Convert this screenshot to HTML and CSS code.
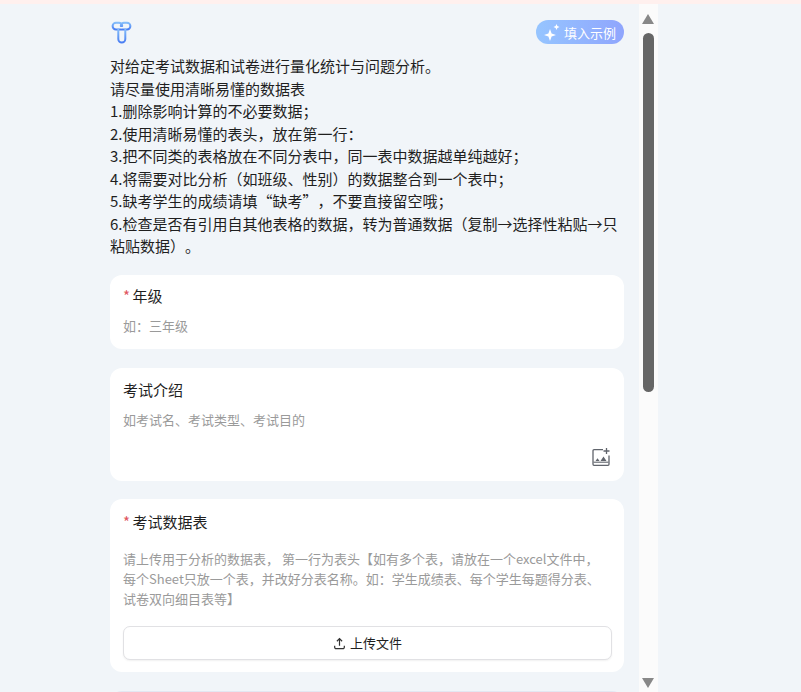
FILE: index.html
```html
<!DOCTYPE html>
<html lang="zh-CN">
<head>
<meta charset="utf-8">
<title>考试数据分析</title>
<link rel="stylesheet" href="styles.css">
</head>
<body>
<div class="top-strip"></div>
<div class="page">
  <main class="content">
    <header class="head">
      <svg class="logo" width="22" height="24" viewBox="0 0 22 24" fill="none">
        <defs><linearGradient id="lg" x1="0" y1="0" x2="0" y2="1"><stop offset="0" stop-color="#84bdf9"/><stop offset="1" stop-color="#4a7ef3"/></linearGradient></defs>
        <path d="M10 8.500H5a3.200 3.200 0 0 1 0-6.800h3a3.200 3.200 0 0 1 3.200 3.200V5M11 8.500h5a3.200 3.200 0 0 0 0-6.800h-3a3.200 3.200 0 0 0-3.200 3.200V5" stroke="url(#lg)" stroke-width="2" stroke-linecap="round"/>
        <path d="M7.300 8.500v9.500a3.500 3.500 0 0 0 7 0v-9.500" stroke="url(#lg)" stroke-width="2" stroke-linecap="round"/>
      </svg>
      <button class="fill-btn" type="button">
        <svg width="20" height="20" viewBox="0 0 20 20" fill="#fff"><path d="M7 7l1.600 4.400L13 13l-4.400 1.600L7 19l-1.600-4.400L1 13l4.400-1.600z"/><path d="M13.500 2l.9 2.100 2.100.9-2.100.9-.9 2.100-.9-2.100-2.100-.9 2.100-.9z"/></svg>
        <span>填入示例</span>
      </button>
    </header>
    <div class="intro">
      <p>对给定考试数据和试卷进行量化统计与问题分析。</p>
      <p>请尽量使用清晰易懂的数据表</p>
      <p>1.删除影响计算的不必要数据；</p>
      <p>2.使用清晰易懂的表头，放在第一行：</p>
      <p>3.把不同类的表格放在不同分表中，同一表中数据越单纯越好；</p>
      <p>4.将需要对比分析（如班级、性别）的数据整合到一个表中；</p>
      <p>5.缺考学生的成绩请填“缺考”，不要直接留空哦；</p>
      <p>6.检查是否有引用自其他表格的数据，转为普通数据（复制→选择性粘贴→只粘贴数据）。</p>
    </div>
    <section class="card card-grade">
      <div class="label"><span class="req">*</span> 年级</div>
      <div class="hint">如：三年级</div>
    </section>
    <section class="card card-intro">
      <div class="label">考试介绍</div>
      <div class="hint">如考试名、考试类型、考试目的</div>
      <svg class="img-add" width="20" height="20" viewBox="0 0 20 20" fill="none">
        <path d="M12 2.700H3a1 1 0 0 0-1 1v13.600a1 1 0 0 0 1 1h14a1 1 0 0 0 1-1V8.500" stroke="#60646c" stroke-width="1.300"/>
        <path d="M15.500 1v6M12.500 4h6" stroke="#60646c" stroke-width="1.300"/>
        <path d="M2.500 15.200h15" stroke="#60646c" stroke-width="1.100"/>
        <path d="M4.500 14l2-2.800 2 2.800zM9.500 14l3-4.500 3 4.500z" fill="#60646c"/>
      </svg>
    </section>
    <section class="card card-data">
      <div class="label"><span class="req">*</span> 考试数据表</div>
      <div class="hint data-hint">请上传用于分析的数据表， 第一行为表头【如有多个表，请放在一个excel文件中，每个Sheet只放一个表，并改好分表名称。如：学生成绩表、每个学生每题得分表、试卷双向细目表等】</div>
      <button class="upload" type="button">
        <svg width="13" height="13" viewBox="0 0 14 14" fill="none" stroke="#333" stroke-width="1.300"><path d="M7 9.500V2M4.200 4.600L7 1.800l2.800 2.800"/><path d="M1.800 9.500v1.500a1.500 1.500 0 0 0 1.500 1.500h7.400a1.500 1.500 0 0 0 1.500-1.500V9.500"/></svg>
        <span class="upload-text">上传文件</span>
      </button>
    </section>
    <section class="card card-next"></section>
  </main>
  <aside class="scrollbar">
    <span class="arrow-up"></span>
    <span class="thumb"></span>
    <span class="arrow-down"></span>
  </aside>
</div>
</body>
</html>
```
FILE: styles.css
```css
* { box-sizing: border-box; }
html, body { margin: 0; height: 100%; overflow: hidden; }
body {
  background: #f1f5f9;
  font-family: "Noto Sans CJK SC", "Noto Sans", sans-serif;
  color: #1f1f1f;
  text-spacing-trim: space-all;
}
.top-strip { height: 4px; background: #fff0ee; }
.page { display: flex; height: 688px; overflow: hidden; }
.content { width: 639px; padding: 0 15px 0 110px; flex: none; }
.head {
  display: flex;
  justify-content: space-between;
  align-items: flex-start;
  height: 51px;
  padding-top: 16px;
}
.logo { display: block; margin: 1px 0 0 1px; }
.fill-btn {
  display: flex;
  align-items: center;
  gap: 1px;
  width: 88px;
  height: 24px;
  padding: 0 0 0 7px;
  border: 0;
  border-radius: 12px;
  background: linear-gradient(90deg, #96c5ff, #8fa5fd);
  color: #fff;
  font: 13px "Noto Sans CJK SC", sans-serif;
}
.intro { font-size: 15px; line-height: 22.5px; height: 220px; }
.intro p { margin: 0; }
.card { background: #fff; border-radius: 12px; padding: 10px 13px; margin-bottom: 19px; position: relative; }
.label { font-size: 15px; line-height: 22px; color: #1f1f1f; }
.req { color: #e0555f; margin-right: -1px; }
.hint { font-size: 13px; line-height: 20px; color: #9a9a9a; margin-top: 9px; }
.card-grade { height: 74px; }
.card-intro { height: 113px; margin-bottom: 18px; padding-top: 11px; }
.img-add { position: absolute; right: 13px; bottom: 14px; }
.card-data { height: 173px; padding-top: 12px; }
.data-hint { margin-top: 16px; }
.upload {
  display: flex;
  align-items: center;
  justify-content: center;
  gap: 4px;
  width: calc(100% + 1px);
  height: 34px;
  margin-top: 17px;
  background: #fff;
  border: 1px solid #e1e1e4;
  border-radius: 7px;
  box-shadow: 0 1px 2px rgba(0, 0, 0, .06);
  color: #1f1f1f;
  font: 13px/17px "Noto Sans CJK SC", sans-serif;
}
.upload-text { margin-bottom: 2px; }
.card-next { height: 60px; border-top: 1px solid #e3e7f2; }
.scrollbar {
  position: relative;
  width: 19px;
  flex: none;
  background: #fbfbfb;
}
.arrow-up, .arrow-down {
  position: absolute;
  left: 3px;
  width: 0;
  height: 0;
  border-left: 6.500px solid transparent;
  border-right: 6.500px solid transparent;
}
.arrow-up { top: 10px; border-bottom: 10px solid #888; }
.arrow-down { bottom: 4px; border-top: 10px solid #888; }
.thumb { position: absolute; top: 29px; left: 4px; width: 11px; height: 359px; border-radius: 6px; background: #666; }
```
